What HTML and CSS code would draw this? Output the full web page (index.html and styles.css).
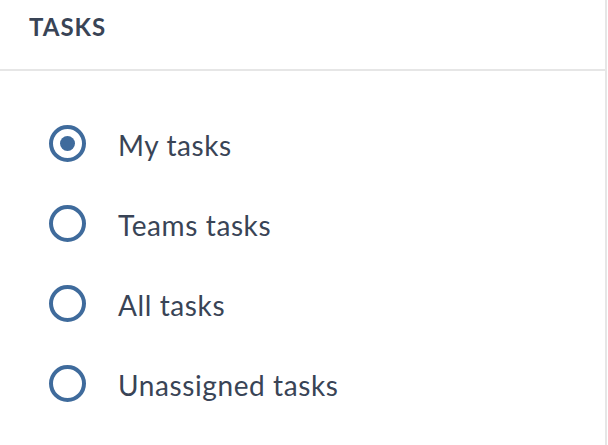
FILE: index.html
```html
<!DOCTYPE html>
<html lang="en">
<head>
    <meta charset="UTF-8">
    <meta name="viewport" content="width=device-width, initial-scale=1.0">
    <title>Tasks filter</title>
    <link rel="stylesheet" href="styles.css">
</head>
<body>
    <div class="panel">
        <div class="panel-header">
            <h2 class="panel-title">TASKS</h2>
        </div>
        <ul class="task-filter">
            <li class="filter-option">
                <span class="radio checked"></span>
                <span class="label">My tasks</span>
            </li>
            <li class="filter-option">
                <span class="radio"></span>
                <span class="label">Teams tasks</span>
            </li>
            <li class="filter-option">
                <span class="radio"></span>
                <span class="label">All tasks</span>
            </li>
            <li class="filter-option">
                <span class="radio"></span>
                <span class="label">Unassigned tasks</span>
            </li>
        </ul>
    </div>
</body>
</html>
```

FILE: styles.css
```css
body {
    margin: 0;
    background: #fff;
    font-family: Lato, "Open Sans", sans-serif;
    color: #394456;
}

.panel {
    width: 605px;
    height: 100vh;
    border-right: 2px solid #e6e6e6;
}

.panel-header {
    height: 69px;
    padding-left: 29px;
    border-bottom: 2px solid #e6e6e6;
}

.panel-title {
    margin: 0;
    padding-top: 13px;
    font-size: 24px;
    font-weight: 700;
    line-height: 28px;
    letter-spacing: 1px;
}

.task-filter {
    list-style: none;
    margin: 0;
    padding: 54px 0 0 49px;
    display: flex;
    flex-direction: column;
    gap: 43px;
}

.filter-option {
    display: flex;
    align-items: center;
    gap: 32px;
    height: 37px;
    cursor: pointer;
}

.radio {
    width: 37px;
    height: 37px;
    box-sizing: border-box;
    border: 4px solid #3f6b9c;
    border-radius: 50%;
    display: flex;
    align-items: center;
    justify-content: center;
    flex-shrink: 0;
}

.radio.checked::after {
    content: "";
    width: 15px;
    height: 15px;
    border-radius: 50%;
    background: #3f6b9c;
}

.label {
    padding-top: 4px;
    font-size: 28px;
    line-height: 37px;
    letter-spacing: 0.6px;
}
```
